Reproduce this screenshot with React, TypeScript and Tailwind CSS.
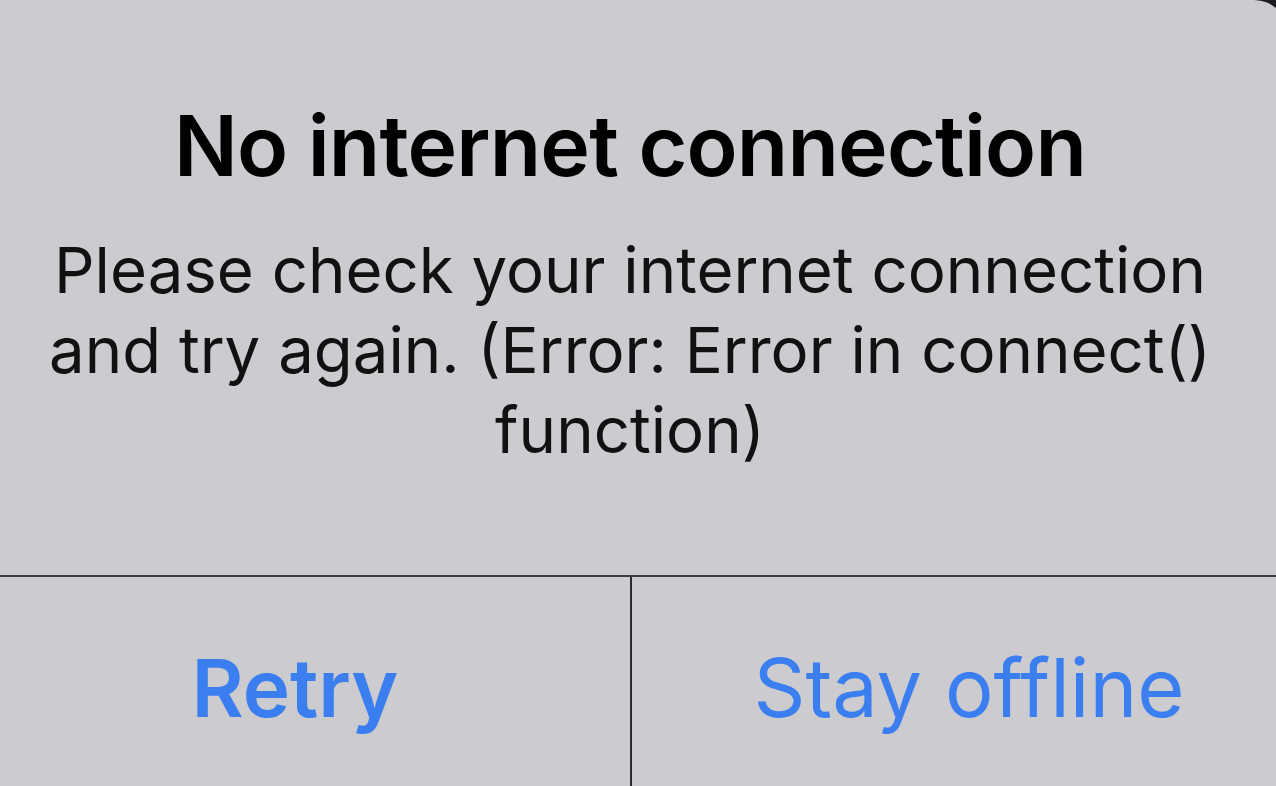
import React from "react";

export default function App() {
  return (
    <div className="w-[1276px] h-[786px] overflow-hidden bg-[#1c1c1e]" style={{ fontFamily: "Inter, 'Noto Sans', sans-serif" }}>
      <div className="w-[1288px] h-[790px] bg-[#cccbd0] rounded-tr-[34px] rounded-br-[16px] flex flex-col">
        <div className="h-[575px] pr-[28px] flex flex-col items-center text-center">
          <div className="mt-[96px] text-[84px] leading-[100px] font-semibold text-black tracking-[-0.8px]">
            No internet connection
          </div>
          <div className="mt-[34px] text-[63.5px] leading-[80px] text-[#111] w-[1240px]">
            Please check your internet connection and try again. (Error: Error in connect() function)
          </div>
        </div>
        <div className="h-[2px] bg-[#3c3c3e]" />
        <div className="flex flex-1 pr-[12px]">
          <button className="w-[630px] flex items-center justify-center pt-[8px] pr-[40px] text-[80px] leading-[100px] font-semibold text-[#3a7ef0]">
            Retry
          </button>
          <div className="w-[2px] bg-[#2c2c2e]" />
          <button className="flex-1 flex items-center justify-center pt-[8px] pl-[30px] text-[81px] leading-[100px] text-[#3a7ef0]">
            Stay offline
          </button>
        </div>
      </div>
    </div>
  );
}
